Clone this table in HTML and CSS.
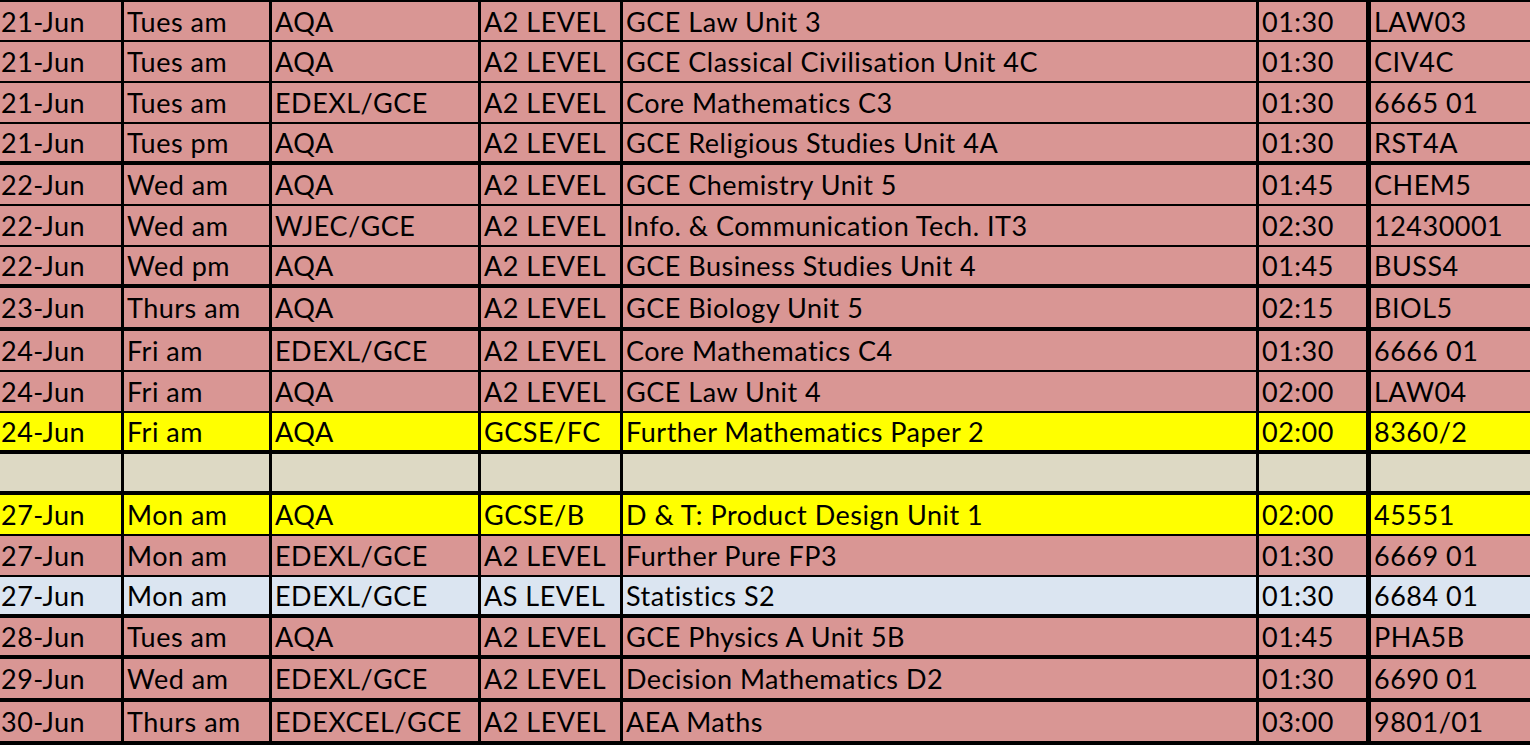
FILE: index.html
```html
<!DOCTYPE html>
<html lang="en">
<head>
	<meta charset="UTF-8">
	<title>Exam timetable</title>
<link rel="stylesheet" href="styles.css">
</head>
<body>
<table class="exams">
	<colgroup>
		<col class="c-date">
		<col class="c-day">
		<col class="c-board">
		<col class="c-level">
		<col class="c-title">
		<col class="c-time">
		<col class="c-code">
	</colgroup>
	<tbody>
		<tr class="first"><td>21-Jun</td><td>Tues am</td><td>AQA</td><td>A2 LEVEL</td><td>GCE Law Unit 3</td><td>01:30</td><td>LAW03</td></tr>
		<tr><td>21-Jun</td><td>Tues am</td><td>AQA</td><td>A2 LEVEL</td><td>GCE Classical Civilisation Unit 4C</td><td>01:30</td><td>CIV4C</td></tr>
		<tr><td>21-Jun</td><td>Tues am</td><td>EDEXL/GCE</td><td>A2 LEVEL</td><td>Core Mathematics C3</td><td>01:30</td><td>6665 01</td></tr>
		<tr class="thick"><td>21-Jun</td><td>Tues pm</td><td>AQA</td><td>A2 LEVEL</td><td>GCE Religious Studies Unit 4A</td><td>01:30</td><td>RST4A</td></tr>
		<tr><td>22-Jun</td><td>Wed am</td><td>AQA</td><td>A2 LEVEL</td><td>GCE Chemistry Unit 5</td><td>01:45</td><td>CHEM5</td></tr>
		<tr><td>22-Jun</td><td>Wed am</td><td>WJEC/GCE</td><td>A2 LEVEL</td><td>Info. &amp; Communication Tech. IT3</td><td>02:30</td><td>12430001</td></tr>
		<tr class="thick"><td>22-Jun</td><td>Wed pm</td><td>AQA</td><td>A2 LEVEL</td><td>GCE Business Studies Unit 4</td><td>01:45</td><td>BUSS4</td></tr>
		<tr class="thick tall"><td>23-Jun</td><td>Thurs am</td><td>AQA</td><td>A2 LEVEL</td><td>GCE Biology Unit 5</td><td>02:15</td><td>BIOL5</td></tr>
		<tr><td>24-Jun</td><td>Fri am</td><td>EDEXL/GCE</td><td>A2 LEVEL</td><td>Core Mathematics C4</td><td>01:30</td><td>6666 01</td></tr>
		<tr><td>24-Jun</td><td>Fri am</td><td>AQA</td><td>A2 LEVEL</td><td>GCE Law Unit 4</td><td>02:00</td><td>LAW04</td></tr>
		<tr class="gcse thick"><td>24-Jun</td><td>Fri am</td><td>AQA</td><td>GCSE/FC</td><td>Further Mathematics Paper 2</td><td>02:00</td><td>8360/2</td></tr>
		<tr class="gap thick"><td></td><td></td><td></td><td></td><td></td><td></td><td></td></tr>
		<tr class="gcse"><td>27-Jun</td><td>Mon am</td><td>AQA</td><td>GCSE/B</td><td>D &amp; T: Product Design Unit 1</td><td>02:00</td><td>45551</td></tr>
		<tr><td>27-Jun</td><td>Mon am</td><td>EDEXL/GCE</td><td>A2 LEVEL</td><td>Further Pure FP3</td><td>01:30</td><td>6669 01</td></tr>
		<tr class="as thick"><td>27-Jun</td><td>Mon am</td><td>EDEXL/GCE</td><td>AS LEVEL</td><td>Statistics S2</td><td>01:30</td><td>6684 01</td></tr>
		<tr class="thick"><td>28-Jun</td><td>Tues am</td><td>AQA</td><td>A2 LEVEL</td><td>GCE Physics A Unit 5B</td><td>01:45</td><td>PHA5B</td></tr>
		<tr class="thick tall"><td>29-Jun</td><td>Wed am</td><td>EDEXL/GCE</td><td>A2 LEVEL</td><td>Decision Mathematics D2</td><td>01:30</td><td>6690 01</td></tr>
		<tr class="thick tall"><td>30-Jun</td><td>Thurs am</td><td>EDEXCEL/GCE</td><td>A2 LEVEL</td><td>AEA Maths</td><td>03:00</td><td>9801/01</td></tr>
	</tbody>
</table>
</body>
</html>
```

FILE: styles.css
```css
*{padding: 0;margin: 0;box-sizing: border-box;}
body{background: #fff;overflow: hidden;}
.exams{
	width: 1530px;border-collapse: separate;border-spacing: 0;table-layout: fixed;
	font-family: Lato, "Open Sans", sans-serif;font-size: 27px;color: #000;
	letter-spacing: 0.5px;font-variant-ligatures: none;
}
.c-date{width: 124px;}
.c-day{width: 148px;}
.c-board{width: 209px;}
.c-level{width: 142px;}
.c-title{width: 636px;}
.c-time{width: 112px;}
.c-code{width: 159px;}
.exams td{
	height: 41px;padding: 0 0 0 3px;background: #d99694;white-space: nowrap;overflow: hidden;
	border-right: 3px solid #000;border-bottom: 2px solid #000;vertical-align: middle;line-height: 1;
}
.exams td:first-child{padding-left: 1px;}
.exams td:nth-child(6){border-right-width: 5px;}
.exams td:last-child{border-right: none;}
.exams .first td{border-top: 2px solid #000;height: 42px;}
.exams .thick td{border-bottom-width: 4px;}
.exams .tall td{height: 43px;}
.exams .gcse td{background: #ffff00;}
.exams .gap td{background: #ddd9c4;}
.exams .as td{background: #dbe5f1;}
```
